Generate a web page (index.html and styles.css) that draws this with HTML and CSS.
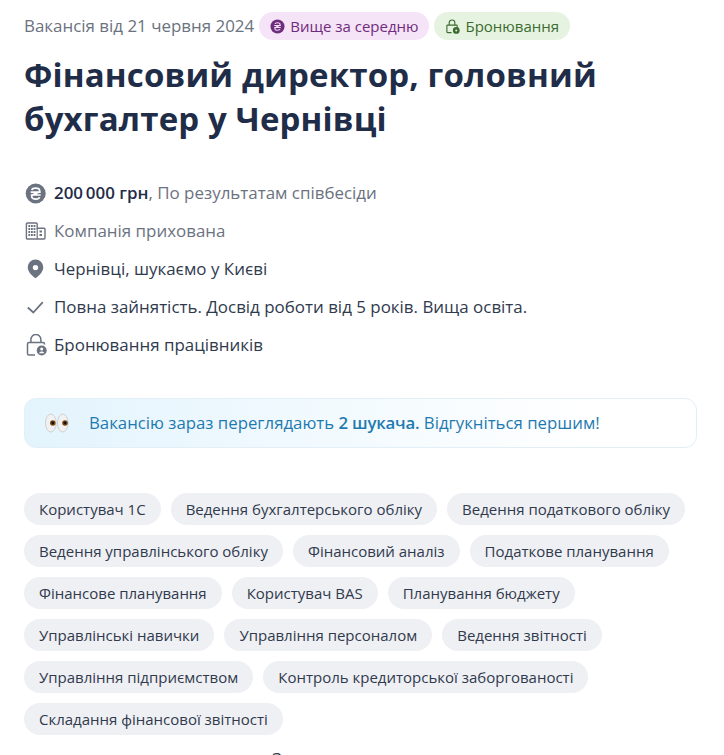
FILE: index.html
```html
<!DOCTYPE html>
<html lang="uk">
<head>
    <meta charset="UTF-8">
    <title>Вакансія</title>
    <link rel="stylesheet" href="styles.css">
</head>
<body>
<div class="container">
    <div class="top-line">
        <span class="date">Вакансія від 21 червня 2024</span>
        <span class="badge badge-purple">
            <svg class="badge-icon" viewBox="0 0 16 16"><circle cx="8" cy="8" r="7.500" fill="#6f2c7c"/><path d="M4.500 6.900h7M4.500 9.100h7M5.300 5.200C6 3.600 10 3.500 10.700 5.200c.5 1.300-.8 2.100-2.700 2.800s-3.200 1.500-2.700 2.800c.7 1.700 4.700 1.600 5.400 0" fill="none" stroke="#f5e3f7" stroke-width="1.200"/></svg>
            Вище за середню
        </span>
        <span class="badge badge-green">
            <svg class="badge-icon" viewBox="0 0 16 16"><path d="M4.500 6.500V4a3 3 0 0 1 6 0v2.500M7 14.500H2.800a.8.8 0 0 1-.8-.8V7.300a.8.8 0 0 1 .8-.8h9.400a.8.8 0 0 1 .8.8V9" fill="none" stroke="#3c6b2f" stroke-width="1.200"/><circle cx="12" cy="12.200" r="3.600" fill="#3c6b2f"/><circle cx="12" cy="12.200" r="1.100" fill="#e6f3e0"/></svg>
            Бронювання
        </span>
    </div>
    <h1>Фінансовий директор, головний бухгалтер у Чернівці</h1>

    <ul class="meta-list">
        <li class="meta-row">
            <svg class="meta-icon" viewBox="0 0 23 23"><circle cx="11.700" cy="11.500" r="10" fill="#6b7280"/><path d="M6.700 10.200h10M6.700 13h10M7.800 8c.8-2.400 6.800-2.500 7.800 0 .7 1.800-1.300 2.800-3.900 3.600s-4.600 1.800-3.900 3.600c1 2.500 7 2.400 7.800 0" fill="none" stroke="#fff" stroke-width="1.700"/></svg>
            <span><b class="salary">200&#8201;000 грн</b><span class="muted">, По результатам співбесіди</span></span>
        </li>
        <li class="meta-row">
            <svg class="meta-icon" viewBox="0 0 23 23"><path d="M2.400 4a1 1 0 0 1 1-1h8.800a1 1 0 0 1 1 1v4.200h6.800a1 1 0 0 1 1 1V18a1 1 0 0 1-1 1H3.400a1 1 0 0 1-1-1z" fill="none" stroke="#6b7280" stroke-width="1.400"/><path d="M4.400 6h1.800M7 6h1.800M9.600 6h1.800M4.400 9h1.800M7 9h1.800M9.600 9h1.800M4.400 12h1.800M7 12h1.800M9.600 12h1.800M4.400 15h1.800M7 15h1.800M9.600 15h1.800M15.500 11.500h2.500M15.500 15h2.500" stroke="#6b7280" stroke-width="1.800"/><path d="M13.200 8.200V19" stroke="#6b7280" stroke-width="1.200"/></svg>
            <span class="muted">Компанія прихована</span>
        </li>
        <li class="meta-row">
            <svg class="meta-icon" viewBox="0 0 23 23"><path fill-rule="evenodd" d="M11.500 1.500a7.800 7.800 0 0 0-7.800 7.800c0 4.700 5.300 9.500 7.800 10.900 2.500-1.400 7.800-6.200 7.800-10.900a7.800 7.800 0 0 0-7.800-7.800zm0 5.400a2.700 2.700 0 1 1 0 5.400 2.700 2.700 0 0 1 0-5.400z" fill="#6b7280"/></svg>
            <span>Чернівці, шукаємо у Києві</span>
        </li>
        <li class="meta-row">
            <svg class="meta-icon" viewBox="0 0 23 23"><path d="M3.800 11.500l5.500 5 9.500-10.300" fill="none" stroke="#6b7280" stroke-width="1.800"/></svg>
            <span>Повна зайнятість. Досвід роботи від 5 років. Вища освіта.</span>
        </li>
        <li class="meta-row">
            <svg class="meta-icon" viewBox="0 0 23 23"><path d="M6.900 8.500V5.500a5 5 0 0 1 10 0v3M11 21H5a1.500 1.500 0 0 1-1.500-1.500V10A1.500 1.500 0 0 1 5 8.500h14A1.500 1.500 0 0 1 20.500 10v.5" fill="none" stroke="#6b7280" stroke-width="1.500"/><circle cx="17.700" cy="16.500" r="5" fill="#6b7280"/><circle cx="17.700" cy="15" r="1.500" fill="#fff"/><path d="M15 19.300c.5-1.200 1.600-1.800 2.700-1.800s2.200.6 2.700 1.800" fill="#fff"/></svg>
            <span>Бронювання працівників</span>
        </li>
    </ul>

    <div class="alert">
        <span class="alert-eyes">
            <svg viewBox="0 0 24 20" width="24" height="20"><ellipse cx="5.800" cy="10" rx="5.300" ry="9" fill="#f1f1f1" stroke="#cfcfcf"/><ellipse cx="17.800" cy="10" rx="5.300" ry="9" fill="#f1f1f1" stroke="#cfcfcf"/><circle cx="7.800" cy="10" r="2.800" fill="#7a4a12"/><circle cx="20" cy="10" r="2.800" fill="#7a4a12"/><circle cx="7.800" cy="10" r="1.400" fill="#111"/><circle cx="20" cy="10" r="1.400" fill="#111"/></svg>
        </span>
        <span class="alert-text">Вакансію зараз переглядають <b class="alert-count">2 шукача.</b> Відгукніться першим!</span>
    </div>

    <div class="tags">
        <span class="tag">Користувач 1С</span>
        <span class="tag">Ведення бухгалтерського обліку</span>
        <span class="tag">Ведення податкового обліку</span>
        <span class="tag">Ведення управлінського обліку</span>
        <span class="tag">Фінансовий аналіз</span>
        <span class="tag">Податкове планування</span>
        <span class="tag">Фінансове планування</span>
        <span class="tag">Користувач BAS</span>
        <span class="tag">Планування бюджету</span>
        <span class="tag">Управлінські навички</span>
        <span class="tag">Управління персоналом</span>
        <span class="tag">Ведення звітності</span>
        <span class="tag">Управління підприємством</span>
        <span class="tag">Контроль кредиторської заборгованості</span>
        <span class="tag">Складання фінансової звітності</span>
    </div>

    <p class="next-title">З</p>
</div>
</body>
</html>
```

FILE: styles.css
```css
/* General Styles */
html, body {
    height: 755px;
    overflow: hidden;
}

body {
    font-family: 'Open Sans', 'Noto Sans', sans-serif;
    font-size: 16.93px;
    line-height: 24px;
    margin: 0;
    padding: 0;
    background: #fff;
    color: #303a4d;
}

.container {
    padding: 12px 27px 0 24px;
}

/* Top line */
.top-line {
    display: flex;
    align-items: center;
    gap: 5px;
    height: 28px;
}

.date {
    color: #6b7280;
}

.badge {
    display: flex;
    align-items: center;
    gap: 5px;
    height: 28px;
    padding: 0 11px;
    border-radius: 14px;
    font-size: 15px;
}

.badge-icon {
    width: 15px;
    height: 15px;
}

.badge-purple {
    background: #f5e3f7;
    color: #6f2c7c;
}

.badge-green {
    background: #e6f3e0;
    color: #3c6b2f;
}

h1 {
    margin: 13px 0 0;
    font-size: 33px;
    line-height: 44px;
    letter-spacing: 0.15px;
    font-weight: 700;
    color: #1f2d48;
}

/* Details */
.meta-list {
    list-style: none;
    margin: 33px 0 0;
    padding: 0;
}

.meta-row {
    display: flex;
    align-items: center;
    gap: 7px;
    height: 38px;
}

.meta-icon {
    width: 23px;
    height: 23px;
    flex-shrink: 0;
}

.salary {
    color: #1f2d48;
    font-weight: 600;
}

.muted {
    color: #6b7280;
}

/* Alert */
.alert {
    display: flex;
    align-items: center;
    height: 50px;
    box-sizing: border-box;
    margin-top: 34px;
    padding-left: 20px;
    border: 1px solid #e2eff7;
    border-radius: 12px;
    background: linear-gradient(to right, #e3f4fd, #fff 85%);
    color: #1f7ab0;
}

.alert-eyes {
    display: flex;
    width: 44px;
}

.alert-text {
    font-size: 16.8px;
}

.alert-count {
    font-weight: 600;
    letter-spacing: -0.2px;
}

/* Tags */
.tags {
    display: flex;
    flex-wrap: wrap;
    gap: 10px;
    margin-top: 45px;
}

.tag {
    height: 32px;
    padding: 0 15px;
    border-radius: 16px;
    background: #eff0f4;
    font-size: 15px;
    line-height: 33px;
}

.next-title {
    margin: 12px 0 0;
    padding-left: 248px;
}
```
